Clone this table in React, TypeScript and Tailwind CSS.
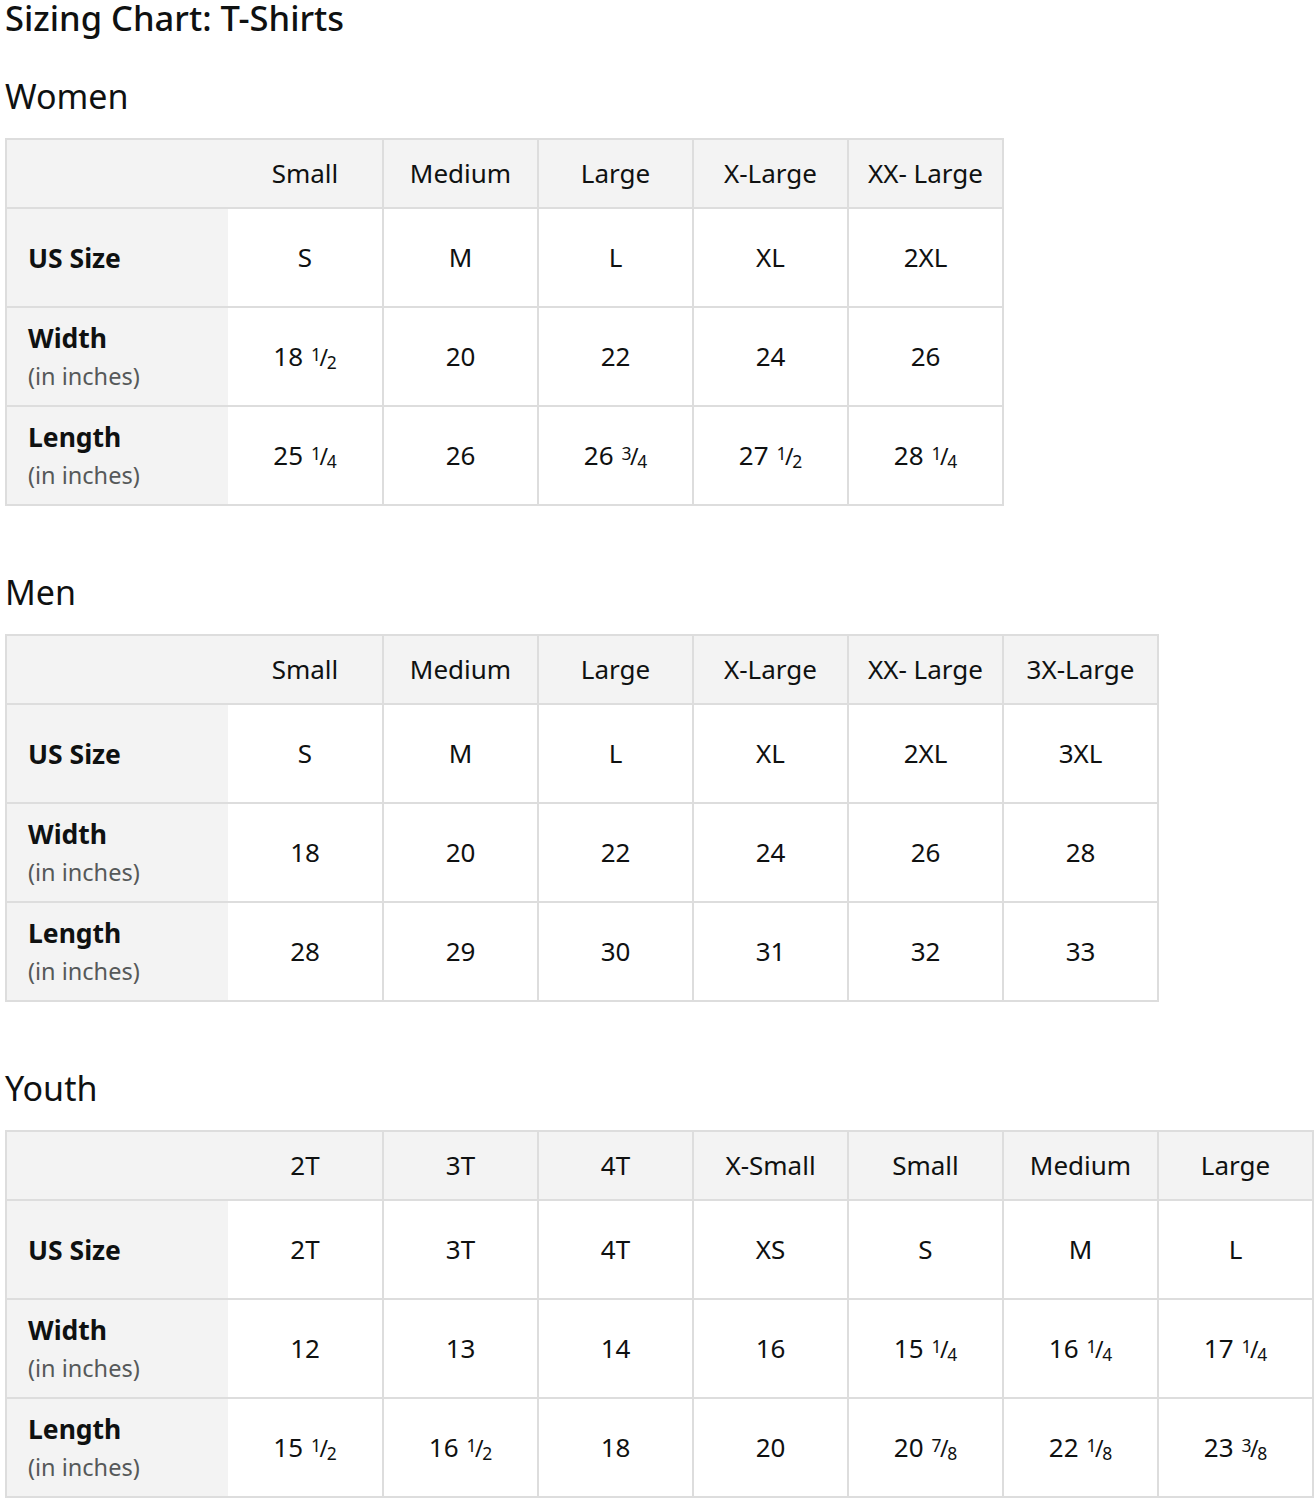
import React from 'react';

type Chart = {
  title: string;
  sizes: string[];
  us: string[];
  width: string[];
  length: string[];
};

const charts: Chart[] = [
  {
    title: 'Women',
    sizes: ['Small', 'Medium', 'Large', 'X-Large', 'XX- Large'],
    us: ['S', 'M', 'L', 'XL', '2XL'],
    width: ['18 1/2', '20', '22', '24', '26'],
    length: ['25 1/4', '26', '26 3/4', '27 1/2', '28 1/4'],
  },
  {
    title: 'Men',
    sizes: ['Small', 'Medium', 'Large', 'X-Large', 'XX- Large', '3X-Large'],
    us: ['S', 'M', 'L', 'XL', '2XL', '3XL'],
    width: ['18', '20', '22', '24', '26', '28'],
    length: ['28', '29', '30', '31', '32', '33'],
  },
  {
    title: 'Youth',
    sizes: ['2T', '3T', '4T', 'X-Small', 'Small', 'Medium', 'Large'],
    us: ['2T', '3T', '4T', 'XS', 'S', 'M', 'L'],
    width: ['12', '13', '14', '16', '15 1/4', '16 1/4', '17 1/4'],
    length: ['15 1/2', '16 1/2', '18', '20', '20 7/8', '22 1/8', '23 3/8'],
  },
];

// "18 1/2" -> 18 + stacked fraction
const Value = ({ v }: { v: string }) => {
  const [whole, frac] = v.split(' ');
  if (!frac) return <>{v}</>;
  const [num, den] = frac.split('/');
  return (
    <span className="whitespace-nowrap">
      {whole}
      <span className="ml-[8px]">
        <span className="align-[5px] text-[17.5px]">{num}</span>
        <span className="mx-[-1.5px] text-[23px]">/</span>
        <span className="align-[-3px] text-[17.5px]">{den}</span>
      </span>
    </span>
  );
};

const SizeTable = ({ chart }: { chart: Chart }) => {
  const rows = [
    { label: 'US Size', sub: null, values: chart.us },
    { label: 'Width', sub: '(in inches)', values: chart.width },
    { label: 'Length', sub: '(in inches)', values: chart.length },
  ];
  const cell = (i: number) =>
    i === 0
      ? 'border-y-2 border-r-2 border-[#dddddd] text-center align-middle'
      : 'border-2 border-[#dddddd] text-center align-middle';
  return (
    <table
      className="table-fixed border-collapse border-2 border-[#dddddd] text-[26px] text-[#0f1111]"
      style={{ width: 222 + chart.sizes.length * 155 }}
    >
      <colgroup>
        <col className="w-[222px]" />
        {chart.sizes.map((s) => (
          <col key={s} className="w-[155px]" />
        ))}
      </colgroup>
      <thead>
        <tr className="h-[69px] bg-[#f3f3f3]">
          <th className="border-y-2 border-l-2 border-[#dddddd]" />
          {chart.sizes.map((s, i) => (
            <th key={s} className={`${cell(i)} font-normal`}>
              {s}
            </th>
          ))}
        </tr>
      </thead>
      <tbody>
        {rows.map((r) => (
          <tr key={r.label} className="h-[99px]">
            <td className="border-y-2 border-l-2 border-[#dddddd] bg-[#f3f3f3] pl-[21px] text-left align-middle leading-[38px]">
              <div className="text-[26.5px] font-bold">{r.label}</div>
              {r.sub && <div className="text-[23.5px] text-[#565959]">{r.sub}</div>}
            </td>
            {r.values.map((v, i) => (
              <td key={i} className={`${cell(i)} bg-white`}>
                <Value v={v} />
              </td>
            ))}
          </tr>
        ))}
      </tbody>
    </table>
  );
}

export default function App() {
  return (
    <div className="min-h-[1500px] bg-white pl-[5px] font-['Noto_Sans',sans-serif] text-[#0f1111]">
      <h1 className="text-[34.5px] font-medium leading-[36px]">Sizing Chart: T-Shirts</h1>
      {charts.map((c, i) => (
        <section key={c.title} className={i === 0 ? 'mt-[38px]' : 'mt-[64px]'}>
          <h2 className="mb-[20px] text-[34px] font-normal leading-[44px]">{c.title}</h2>
          <SizeTable chart={c} />
        </section>
      ))}
    </div>
  );
}
